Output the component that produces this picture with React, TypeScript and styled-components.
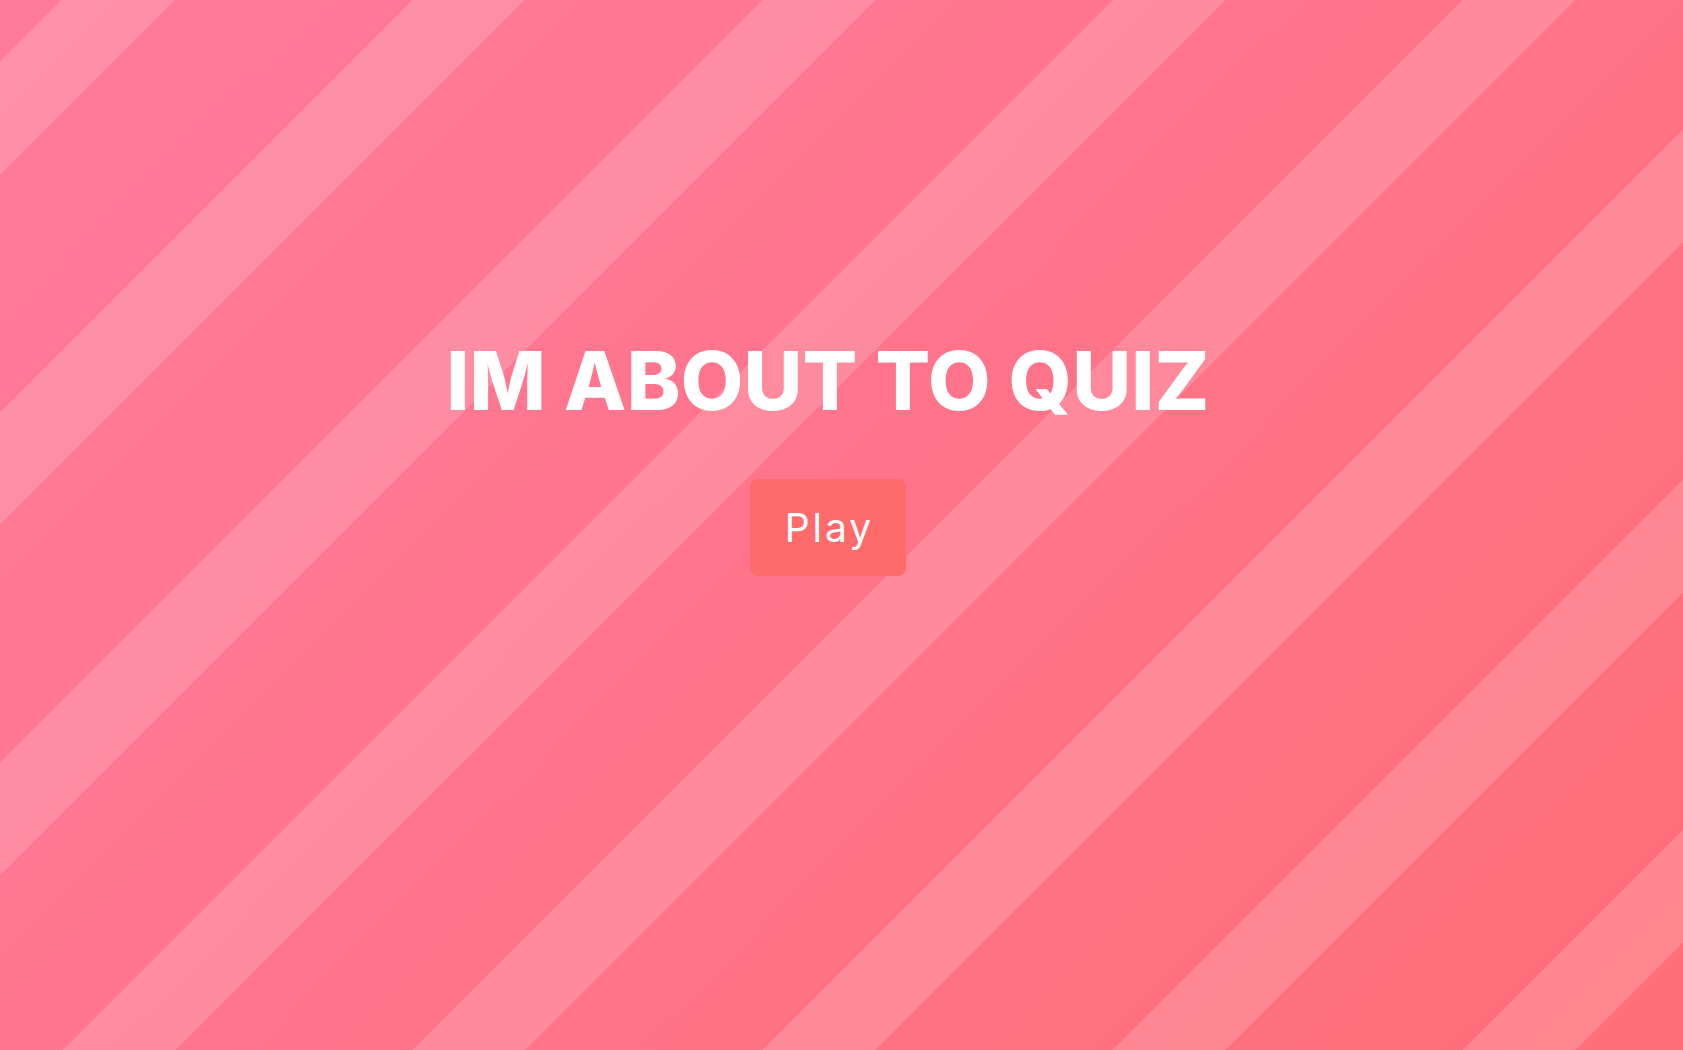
import React from "react";
import styled, { createGlobalStyle } from "styled-components";

const GlobalStyle = createGlobalStyle`
  html, body {
    margin: 0;
    padding: 0;
    height: 100%;
    overflow: hidden;
  }
  body {
    font-family: Inter, "Noto Sans", sans-serif;
  }
`;

const Stage = styled.main`
  box-sizing: border-box;
  width: 100vw;
  height: 100vh;
  display: flex;
  flex-direction: column;
  align-items: center;
  justify-content: center;
  gap: 57px;
  padding: 0 27px 133px 0;
  background-color: #ff758c;
  background-image:
    repeating-linear-gradient(
      135deg,
      rgba(255, 255, 255, 0) 0px,
      rgba(255, 255, 255, 0) 43.84px,
      rgba(255, 255, 255, 0.16) 43.84px,
      rgba(255, 255, 255, 0.16) 123.74px,
      rgba(255, 255, 255, 0) 123.74px,
      rgba(255, 255, 255, 0) 247.49px
    ),
    linear-gradient(135deg, #ff7b9b 0%, #ff748a 50%, #ff6e78 100%);
`;

const Title = styled.h1`
  margin: 0;
  font-family: Inter, "Noto Sans", sans-serif;
  font-weight: 800;
  font-size: 81px;
  line-height: 1;
  letter-spacing: 0.2px;
  color: #ffffff;
  white-space: nowrap;
`;

const PlayButton = styled.button`
  box-sizing: border-box;
  width: 156px;
  height: 97px;
  display: flex;
  align-items: center;
  justify-content: center;
  padding: 0 0 0 3px;
  border: none;
  border-radius: 8px;
  background: #ff6b6b;
  color: #ffffff;
  font-family: Inter, "Noto Sans", sans-serif;
  font-weight: 400;
  font-size: 39px;
  letter-spacing: 3px;
  cursor: pointer;
`;

export default function App() {
  return (
    <>
      <GlobalStyle />
      <Stage>
        <Title>IM ABOUT TO QUIZ</Title>
        <PlayButton>Play</PlayButton>
      </Stage>
    </>
  );
}
